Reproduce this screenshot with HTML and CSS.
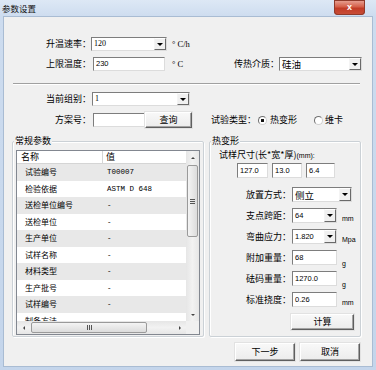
FILE: index.html
```html
<!DOCTYPE html>
<html>
<head>
	<meta charset="UTF-8">
	<title>参数设置</title>
	<link rel="stylesheet" href="styles.css">
</head>
<body>
<div class="window">

	<div class="titlebar">
		<span class="title">参数设置</span>
		<span class="close">x</span>
	</div>

	<div class="client">

		<div class="row r1">
			<span class="label">升温速率：</span>
			<span class="combo w-rate"><span class="text serif">120</span><span class="drop"></span></span>
			<span class="unit-serif u-rate">° C/h</span>
		</div>

		<div class="row r2">
			<span class="label">上限温度：</span>
			<span class="edit w-limit"><span class="text">230</span></span>
			<span class="unit-serif u-limit">° C</span>
			<span class="label label-medium">传热介质：</span>
			<span class="combo w-medium"><span class="text cjk">硅油</span><span class="drop"></span></span>
		</div>

		<div class="sep"></div>

		<div class="row r3">
			<span class="label">当前组别：</span>
			<span class="combo w-group"><span class="text serif">1</span><span class="drop"></span></span>
		</div>

		<div class="row r4">
			<span class="label">方案号：</span>
			<span class="edit w-plan"></span>
			<button class="btn btn-query">查询</button>
			<span class="type-label">试验类型：</span>
			<span class="radio checked"></span><span class="radio-text">热变形</span>
			<span class="radio radio-vicat"></span><span class="radio-text">维卡</span>
		</div>

		<div class="groups">

			<div class="group group-common">
				<div class="group-title">常规参数</div>
				<div class="list">
					<div class="list-view">
						<div class="list-head"><span class="c1">名称</span><span class="c2">值</span></div>
						<div class="list-row odd"><span class="c1">试验编号</span><span class="c2">T00007</span></div>
						<div class="list-row"><span class="c1">检验依据</span><span class="c2">ASTM D 648</span></div>
						<div class="list-row odd"><span class="c1">送检单位编号</span><span class="c2">-</span></div>
						<div class="list-row"><span class="c1">送检单位</span><span class="c2">-</span></div>
						<div class="list-row odd"><span class="c1">生产单位</span><span class="c2">-</span></div>
						<div class="list-row"><span class="c1">试样名称</span><span class="c2">-</span></div>
						<div class="list-row odd"><span class="c1">材料类型</span><span class="c2">-</span></div>
						<div class="list-row"><span class="c1">生产批号</span><span class="c2">-</span></div>
						<div class="list-row odd"><span class="c1">试样编号</span><span class="c2">-</span></div>
						<div class="list-row"><span class="c1">制备方法</span><span class="c2">-</span></div>
					</div>
					<div class="vscroll">
						<span class="sb-btn"><i class="tri-up"></i></span>
						<span class="sb-thumb-v"><i class="grip-v"></i></span>
						<span class="sb-btn sb-btn-end"><i class="tri-down"></i></span>
					</div>
					<div class="hscroll">
						<span class="sb-btn"><i class="tri-left"></i></span>
						<span class="sb-thumb-h"><i class="grip-h"></i></span>
						<span class="sb-btn sb-btn-end"><i class="tri-right"></i></span>
					</div>
					<div class="corner"></div>
				</div>
			</div>

			<div class="group group-hdt">
				<div class="group-title">热变形</div>
				<div class="size-label">试样尺寸(长*宽*厚)<span class="small">(mm):</span></div>
				<div class="size-inputs">
					<span class="edit w-len"><span class="text">127.0</span></span>
					<span class="edit w-wid"><span class="text">13.0</span></span>
					<span class="edit w-thk"><span class="text">6.4</span></span>
				</div>

				<div class="form">
					<div class="frow">
						<span class="flabel">放置方式：</span>
						<span class="combo w-place"><span class="text cjk">侧立</span><span class="drop"></span></span>
					</div>
					<div class="frow">
						<span class="flabel">支点跨距：</span>
						<span class="combo w-field"><span class="text">64</span><span class="drop"></span></span>
						<span class="funit">mm</span>
					</div>
					<div class="frow">
						<span class="flabel">弯曲应力：</span>
						<span class="combo w-field"><span class="text">1.820</span><span class="drop"></span></span>
						<span class="funit">Mpa</span>
					</div>
					<div class="frow">
						<span class="flabel">附加重量：</span>
						<span class="edit w-field"><span class="text">68</span></span>
						<span class="funit funit-low">g</span>
					</div>
					<div class="frow">
						<span class="flabel">砝码重量：</span>
						<span class="edit w-field"><span class="text">1270.0</span></span>
						<span class="funit funit-low">g</span>
					</div>
					<div class="frow">
						<span class="flabel">标准挠度：</span>
						<span class="edit w-field"><span class="text">0.26</span></span>
						<span class="funit">mm</span>
					</div>
				</div>

				<button class="btn btn-calc">计算</button>
			</div>

		</div>

		<div class="actions">
			<button class="btn btn-action">下一步</button>
			<button class="btn btn-action">取消</button>
		</div>

	</div>
</div>
</body>
</html>
```

FILE: styles.css
```css
html {
	margin: 0;
}

body {
	margin: 0;
	width: 376px;
	height: 370px;
	overflow: hidden;
	font-family: "Noto Sans CJK SC", "Liberation Sans", sans-serif;
	font-size: 9px;
	color: #000;
}

/* window frame */
.window {
	width: 376px;
	height: 370px;
	display: flex;
	flex-direction: column;
	background: linear-gradient(180deg, #dde8f5 0, #cddcef 17px, #c4d5eb 100%);
}

.titlebar {
	height: 17px;
	display: flex;
	align-items: flex-start;
}

.title {
	margin: 2px 0 0 2px;
	font-size: 8.5px;
	line-height: 12px;
	color: #111;
}

.close {
	margin-left: auto;
	margin-right: 11px;
	width: 31px;
	height: 15px;
	border-radius: 0 0 4px 4px;
	background: linear-gradient(180deg, #e9a79a 0, #d5604a 45%, #c23c27 55%, #c9503a 100%);
	box-shadow: inset 0 0 0 1px #8f3a2b;
	color: #fff;
	font: bold 9px/14px "Liberation Sans", sans-serif;
	text-align: center;
}

.client {
	margin: 0 4px;
	height: 349px;
	background: #f0f0f0;
	box-shadow: 0 0 0 1px #a9bcd3;
}

/* top rows */
.row {
	display: flex;
	align-items: center;
	padding-left: 36px;
}

.label {
	width: 51px;
	text-align: right;
	line-height: 12px;
	white-space: nowrap;
	flex: none;
}

.r1 {
	margin-top: 20px;
	height: 14px;
}

.r2 {
	margin-top: 6px;
	height: 14px;
	padding-right: 10px;
}

.r3 {
	margin-top: 7px;
	height: 14px;
}

.r4 {
	margin-top: 6px;
	height: 16px;
}

.sep {
	margin: 12px 12px 0 9px;
	height: 0;
	border-top: 1px solid #a0a0a0;
	border-bottom: 1px solid #fff;
}

/* fields */
.edit,
.combo {
	display: flex;
	align-items: center;
	box-sizing: border-box;
	height: 14px;
	background: #fff;
	border: 1px solid;
	border-color: #7d7d7d #dcdcdc #dcdcdc #7d7d7d;
	flex: none;
}

.text {
	padding-left: 2px;
	font-family: "Liberation Sans", sans-serif;
	font-size: 7.5px;
	line-height: 12px;
	white-space: nowrap;
}

.text.serif {
	font-family: "Liberation Serif", serif;
	font-size: 8px;
}

.text.cjk {
	font-family: "Noto Sans CJK SC", sans-serif;
	font-size: 9.5px;
}

.drop {
	position: relative;
	margin-left: auto;
	width: 12px;
	height: 12px;
	box-sizing: border-box;
	background: #f0f0f0;
	border: 1px solid;
	border-color: #fff #6a6a6a #6a6a6a #f4f4f4;
}

.drop::after {
	content: "";
	position: absolute;
	left: 2px;
	top: 4px;
	border-left: 3px solid transparent;
	border-right: 3px solid transparent;
	border-top: 3px solid #000;
}

.w-rate { margin-left: 0; width: 76px; }
.w-limit { margin-left: 2px; width: 72px; }
.w-medium { width: 83px; }
.w-group { margin-left: 1px; width: 98px; }
.w-plan { margin-left: 2px; width: 52px; }

.unit-serif {
	font-family: "Liberation Serif", serif;
	font-size: 8.5px;
	line-height: 12px;
	white-space: nowrap;
}

.u-rate { margin-left: 5px; }
.u-limit { margin-left: 7px; }

.label-medium {
	margin-left: auto;
	width: 47px;
}

/* buttons */
.btn {
	padding: 0;
	box-sizing: border-box;
	font-family: "Noto Sans CJK SC", sans-serif;
	font-size: 9px;
	line-height: 12px;
	color: #000;
	background: linear-gradient(180deg, #f8f8f8, #ececec);
	border: 1px solid;
	border-color: #fff #5f5f5f #5f5f5f #fff;
	box-shadow: inset -1px -1px 0 #a3a3a3, 0 0 0 1px #e2e2e2;
}

.btn-query {
	width: 47px;
	height: 16px;
}

.type-label {
	margin-left: 19px;
	line-height: 12px;
	white-space: nowrap;
}

.radio {
	margin-left: 2px;
	width: 9px;
	height: 9px;
	box-sizing: border-box;
	border-radius: 50%;
	border: 1px solid;
	border-color: #707070 #d0d0d0 #d0d0d0 #707070;
	background: #fff;
	flex: none;
}

.radio.checked {
	background: radial-gradient(circle, #111 0, #111 1.4px, #fff 2px);
}

.radio-vicat {
	margin-left: 17px;
}

.radio-text {
	margin-left: 3px;
	line-height: 12px;
	white-space: nowrap;
}

.radio-vicat + .radio-text {
	margin-left: 2px;
}

/* group boxes */
.groups {
	margin-top: 13px;
	display: flex;
	padding-left: 8px;
	gap: 5px;
}

.group {
	box-sizing: border-box;
	height: 196px;
	border: 1px solid #cbd1d6;
	border-radius: 2px;
	box-shadow: inset 1px 1px 0 #fff, 1px 1px 0 #fff;
}

.group-common {
	width: 192px;
}

.group-hdt {
	width: 152px;
}

.group-title {
	display: table;
	margin: -7px 0 0 1px;
	padding: 0 1px;
	background: #f0f0f0;
	line-height: 12px;
	white-space: nowrap;
}

/* list view */
.list {
	margin: 3px 0 0 3px;
	width: 184px;
	height: 185px;
	box-sizing: border-box;
	border: 1px solid #828790;
	background: #fff;
	display: grid;
	grid-template-columns: 1fr 13px;
	grid-template-rows: 1fr 13px;
	overflow: hidden;
}

.list-view {
	overflow: hidden;
}

.list-head {
	display: flex;
	height: 13px;
	box-sizing: border-box;
	border-bottom: 1px solid #d5d5d5;
	line-height: 12px;
}

.list-head .c1 {
	width: 86px;
	padding-left: 4px;
	box-sizing: border-box;
	border-right: 1px solid #d5d5d5;
}

.list-head .c2 {
	padding-left: 3px;
}

.list-row {
	display: flex;
	height: 16.5px;
	line-height: 16.5px;
	font-size: 8px;
	white-space: nowrap;
}

.list-row.odd {
	background: #e8e8e8;
}

.list-row .c1 {
	width: 86px;
	padding-left: 8px;
	box-sizing: border-box;
}

.list-row .c2 {
	padding-left: 4px;
	font-family: "Liberation Mono", monospace;
	font-size: 7.5px;
}

/* scrollbars */
.vscroll,
.hscroll {
	display: flex;
	background: linear-gradient(90deg, #e6e6e6, #f2f2f2 50%, #e6e6e6);
}

.vscroll {
	flex-direction: column;
}

.hscroll {
	background: linear-gradient(180deg, #e6e6e6, #f2f2f2 50%, #e6e6e6);
}

.sb-btn {
	width: 13px;
	height: 13px;
	display: flex;
	align-items: center;
	justify-content: center;
	flex: none;
}

.sb-btn-end {
	margin-top: auto;
}

.hscroll .sb-btn-end {
	margin-top: 0;
	margin-left: auto;
}

.tri-up,
.tri-down {
	border-left: 2px solid transparent;
	border-right: 2px solid transparent;
}

.tri-up { border-bottom: 2px solid #444; }
.tri-down { border-top: 2px solid #444; }

.tri-left,
.tri-right {
	border-top: 2px solid transparent;
	border-bottom: 2px solid transparent;
}

.tri-left { border-right: 2px solid #444; }
.tri-right { border-left: 2px solid #444; }

.sb-thumb-v {
	margin: 1px 1px 0 1px;
	height: 72px;
	box-sizing: border-box;
	border: 1px solid #9a9a9a;
	border-radius: 2px;
	background: linear-gradient(90deg, #f4f4f4, #dcdcdc);
	display: flex;
	align-items: center;
	justify-content: center;
}

.grip-v {
	width: 5px;
	height: 5px;
	background: repeating-linear-gradient(180deg, #555 0, #555 1px, transparent 1px, transparent 2px);
}

.sb-thumb-h {
	margin: 1px 0 1px 1px;
	width: 116px;
	box-sizing: border-box;
	border: 1px solid #9a9a9a;
	border-radius: 2px;
	background: linear-gradient(180deg, #f4f4f4, #dcdcdc);
	display: flex;
	align-items: center;
	justify-content: center;
}

.grip-h {
	width: 5px;
	height: 5px;
	background: repeating-linear-gradient(90deg, #555 0, #555 1px, transparent 1px, transparent 2px);
}

.corner {
	background: #f0f0f0;
}

/* heat deflection group */
.size-label {
	margin: 2px 0 0 9px;
	line-height: 12px;
	white-space: nowrap;
}

.small {
	font-family: "Liberation Sans", sans-serif;
	font-size: 7px;
}

.size-inputs {
	display: flex;
	gap: 4px;
	margin: 1px 0 0 27px;
}

.size-inputs .edit {
	height: 15px;
}

.w-len { width: 31px; }
.w-wid { width: 30px; }
.w-thk { width: 29px; }

.form {
	display: flex;
	flex-direction: column;
	gap: 6px;
	margin-top: 9px;
}

.frow {
	display: flex;
	align-items: center;
	height: 15px;
}

.flabel {
	width: 81px;
	text-align: right;
	line-height: 12px;
	white-space: nowrap;
	flex: none;
}

.frow .edit,
.frow .combo {
	margin-left: 1px;
	height: 15px;
}

.frow .drop {
	height: 13px;
}

.frow .drop::after {
	top: 4px;
}

.w-place { width: 60px; }
.w-field { width: 45px; }

.funit {
	align-self: flex-end;
	margin-left: 5px;
	font-family: "Liberation Sans", sans-serif;
	font-size: 7px;
	line-height: 9px;
}

.funit-low {
	margin-bottom: -3px;
}

.btn-calc {
	display: block;
	margin: 7px 0 0 81px;
	width: 63px;
	height: 16px;
}

/* bottom buttons */
.actions {
	display: flex;
	justify-content: flex-end;
	gap: 5px;
	margin-top: 6px;
	padding-right: 12px;
}

.btn-action {
	width: 60px;
	height: 18px;
}
```
